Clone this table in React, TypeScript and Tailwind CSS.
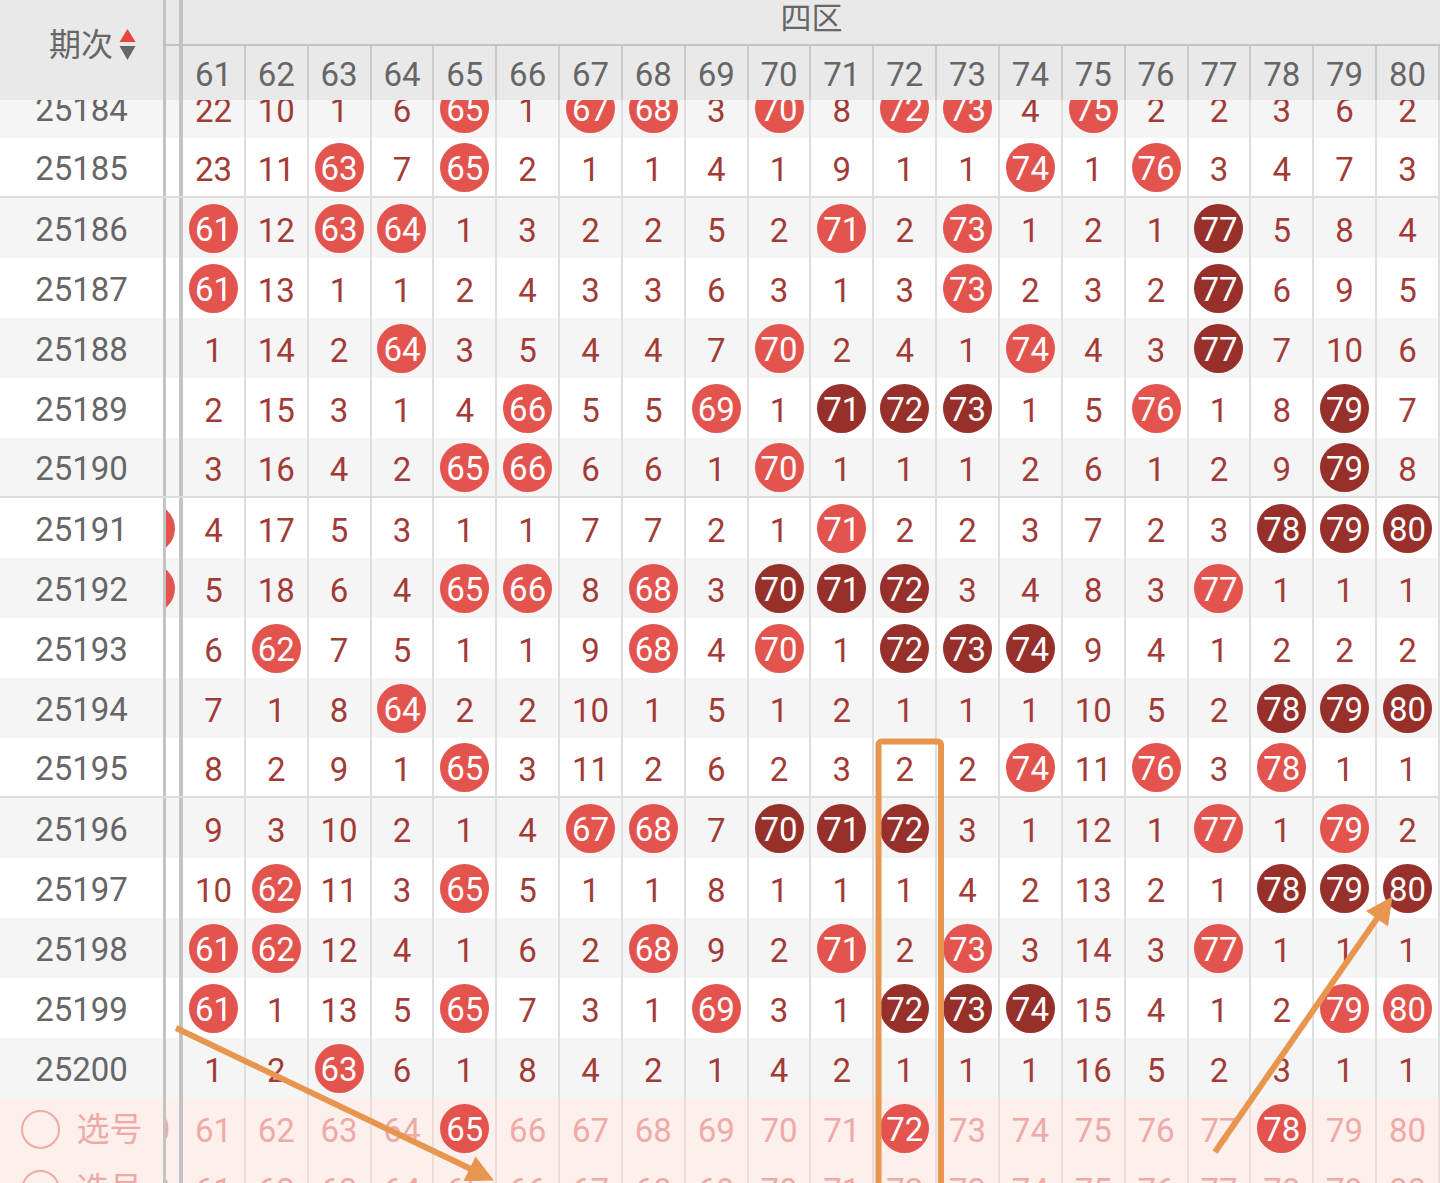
import React from 'react'

// 四区 走势表: columns 61-80, rows by period
const COLS = Array.from({ length: 20 }, (_, i) => String(61 + i))

const ROWS: { id: string; c60: string; cells: string }[] = [
  { id: '25184', c60: '', cells: '22 10 1 6 65R 1 67R 68R 3 70R 8 72R 73R 4 75R 2 2 3 6 2' },
  { id: '25185', c60: '', cells: '23 11 63R 7 65R 2 1 1 4 1 9 1 1 74R 1 76R 3 4 7 3' },
  { id: '25186', c60: '', cells: '61R 12 63R 64R 1 3 2 2 5 2 71R 2 73R 1 2 1 77D 5 8 4' },
  { id: '25187', c60: '', cells: '61R 13 1 1 2 4 3 3 6 3 1 3 73R 2 3 2 77D 6 9 5' },
  { id: '25188', c60: '', cells: '1 14 2 64R 3 5 4 4 7 70R 2 4 1 74R 4 3 77D 7 10 6' },
  { id: '25189', c60: '', cells: '2 15 3 1 4 66R 5 5 69R 1 71D 72D 73D 1 5 76R 1 8 79D 7' },
  { id: '25190', c60: '', cells: '3 16 4 2 65R 66R 6 6 1 70R 1 1 1 2 6 1 2 9 79D 8' },
  { id: '25191', c60: 'R', cells: '4 17 5 3 1 1 7 7 2 1 71R 2 2 3 7 2 3 78D 79D 80D' },
  { id: '25192', c60: 'R', cells: '5 18 6 4 65R 66R 8 68R 3 70D 71D 72D 3 4 8 3 77R 1 1 1' },
  { id: '25193', c60: '', cells: '6 62R 7 5 1 1 9 68R 4 70R 1 72D 73D 74D 9 4 1 2 2 2' },
  { id: '25194', c60: '', cells: '7 1 8 64R 2 2 10 1 5 1 2 1 1 1 10 5 2 78D 79D 80D' },
  { id: '25195', c60: '', cells: '8 2 9 1 65R 3 11 2 6 2 3 2 2 74R 11 76R 3 78R 1 1' },
  { id: '25196', c60: '', cells: '9 3 10 2 1 4 67R 68R 7 70D 71D 72D 3 1 12 1 77R 1 79R 2' },
  { id: '25197', c60: '', cells: '10 62R 11 3 65R 5 1 1 8 1 1 1 4 2 13 2 1 78D 79D 80D' },
  { id: '25198', c60: '', cells: '61R 62R 12 4 1 6 2 68R 9 2 71R 2 73R 3 14 3 77R 1 1 1' },
  { id: '25199', c60: '', cells: '61R 1 13 5 65R 7 3 1 69R 3 1 72D 73D 74D 15 4 1 2 79R 80R' },
  { id: '25200', c60: '', cells: '1 2 63R 6 1 8 4 2 1 4 2 1 1 1 16 5 2 3 1 1' },
]

const PICKS = [
  ['65', '72', '78'],
  [],
]

function Ball({ v }: { v: string }) {
  const kind = v.slice(-1)
  if (kind === 'R' || kind === 'D') {
    return (
      <div
        className={`w-[49px] h-[49px] shrink-0 rounded-full flex items-center justify-center pt-[2px] text-white ${
          kind === 'R' ? 'bg-[#e3544e]' : 'bg-[#972f2a]'
        }`}
      >
        {v.slice(0, -1)}
      </div>
    )
  }
  return <span className="pt-[3px] text-[#a23b36]">{v}</span>
}

function SortIcon() {
  return (
    <svg width="17" height="32" viewBox="0 0 17 32" className="ml-[6px]">
      <polygon points="8.5,0 16.5,13 0.5,13" fill="#e8443a" />
      <polygon points="0.5,17 16.5,17 8.5,31" fill="#666666" />
    </svg>
  )
}

function Dividers({ children }: { children: React.ReactNode }) {
  return (
    <>
      <div className="w-[3px] shrink-0 bg-[#c3c3c3]" />
      {children}
      <div className="w-[4px] shrink-0 bg-[#c3c3c3]" />
    </>
  )
}

function DataRow({ id, c60, cells, idx }: { id: string; c60: string; cells: string; idx: number }) {
  const n = Number(id)
  const bg = idx % 2 === 0 ? 'bg-[#f5f5f5]' : 'bg-white'
  const line = n % 5 === 0 && n !== 25200 ? 'border-b-2 border-[#dcdcdc]' : ''
  return (
    <div className={`flex h-[60px] ${bg} ${line}`}>
      <div className="w-[163px] shrink-0 flex items-center justify-center pt-[3px] text-[#666]">{id}</div>
      <Dividers>
        <div className="w-[13px] shrink-0 overflow-hidden flex items-center pt-[1px]">
          {c60 && <div className="w-[49px] h-[49px] shrink-0 -ml-[40px] rounded-full bg-[#e3544e]" />}
        </div>
      </Dividers>
      <div className="flex-1 flex">
        {cells.split(' ').map((v, i) => (
          <div key={i} className="flex-1 border-r-2 border-[#dedede] flex items-center justify-center pt-[1px]">
            <Ball v={v} />
          </div>
        ))}
      </div>
    </div>
  )
}

function PickRow({ picked }: { picked: string[] }) {
  return (
    <div className="flex h-[60px] bg-[#fdefeb] text-[#eeaaa7]">
      <div className="w-[163px] shrink-0 flex items-center justify-center gap-[17px] pt-[2px]">
        <div className="w-[39px] h-[39px] rounded-full border-2 border-[#eeaaa7]" />
        <span>选号</span>
      </div>
      <Dividers>
        <div className="w-[13px] shrink-0 overflow-hidden flex items-center pt-[3px]">
          <div className="w-[63px] shrink-0 -ml-[46px] flex justify-center">60</div>
        </div>
      </Dividers>
      <div className="flex-1 flex">
        {COLS.map((c) => (
          <div key={c} className="flex-1 border-r-2 border-[#e9dcd9] flex items-center justify-center pt-[1px]">
            {picked.includes(c) ? (
              <div className="w-[49px] h-[49px] rounded-full bg-[#e3544e] text-white flex items-center justify-center pt-[2px]">
                {c}
              </div>
            ) : (
              <span className="pt-[3px]">{c}</span>
            )}
          </div>
        ))}
      </div>
    </div>
  )
}

function Annotations() {
  return (
    <svg className="absolute inset-0 pointer-events-none" width="1440" height="1183" viewBox="0 0 1440 1183">
      <g stroke="#e8964f" strokeWidth="6" fill="none">
        <rect x="878.5" y="741.5" width="62.5" height="480" rx="3" />
        <line x1="176" y1="1028" x2="471" y2="1169" />
        <line x1="1215" y1="1152" x2="1378" y2="917" />
      </g>
      <g fill="#e8964f">
        <polygon points="494,1180.5 463.5,1181 475.5,1156.5" />
        <polygon points="1392.5,896.5 1388,926.5 1366,911" />
      </g>
    </svg>
  )
}

export default function App() {
  return (
    <div className="relative w-[1440px] h-[1183px] overflow-hidden bg-white text-[33px] leading-none font-[Roboto,'Noto_Sans_CJK_SC',sans-serif]">
      <div className="relative z-10 flex h-[100px] bg-[#e9e9e9] text-[#666]">
        <div className="w-[163px] shrink-0 flex items-center justify-center pb-[10px] pl-[22px] text-[32px]">
          期次
          <SortIcon />
        </div>
        <Dividers>
          <div className="w-[13px] shrink-0">
            <div className="h-[46px] border-b-2 border-[#c3c3c3]" />
          </div>
        </Dividers>
        <div className="flex-1 flex flex-col">
          <div className="h-[46px] shrink-0 border-b-2 border-[#c3c3c3] flex items-center justify-center pb-[8px] text-[31px]">
            四区
          </div>
          <div className="flex-1 flex">
            {COLS.map((c) => (
              <div key={c} className="flex-1 border-r-2 border-[#cacaca] flex items-center justify-center pt-[2px]">
                {c}
              </div>
            ))}
          </div>
        </div>
      </div>
      <div className="-mt-[22px]">
        {ROWS.map((r, i) => (
          <DataRow key={r.id} {...r} idx={i} />
        ))}
        {PICKS.map((p, i) => (
          <PickRow key={i} picked={p} />
        ))}
      </div>
      <Annotations />
    </div>
  )
}
